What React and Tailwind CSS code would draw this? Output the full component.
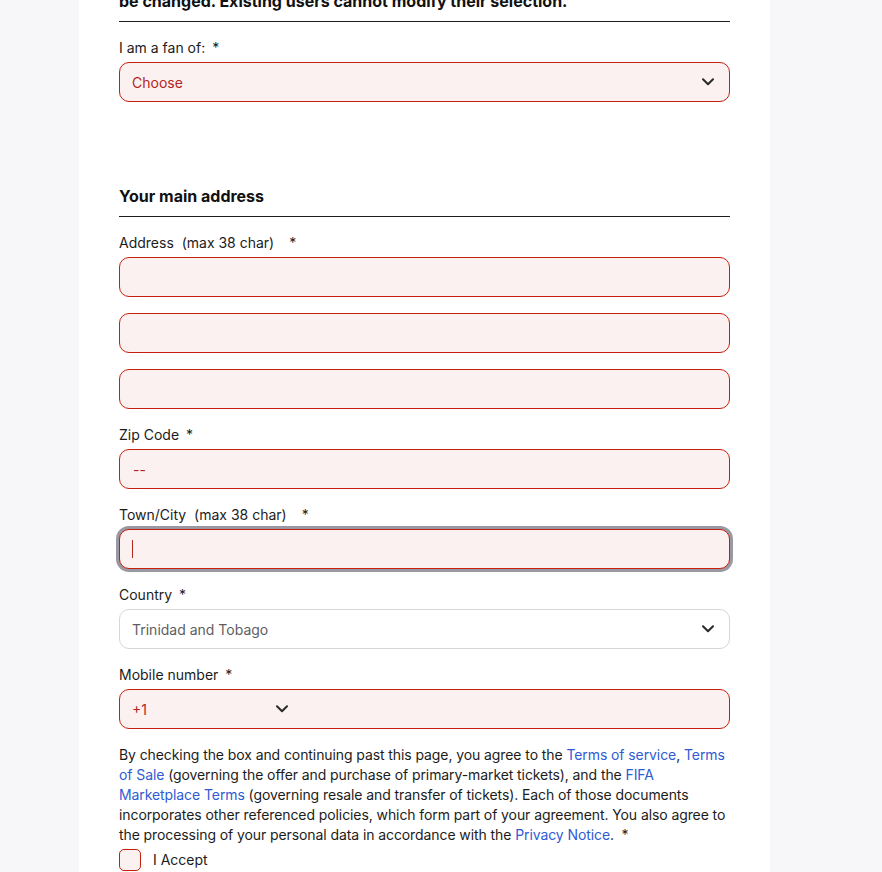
import React from "react";

const Chevron = ({ className = "" }) => (
  <svg width="12" height="8" viewBox="0 0 12 8" className={className} fill="none">
    <path d="M1 1.2 L6 6.2 L11 1.2" stroke="#2a2a2a" strokeWidth="2" strokeLinecap="round" strokeLinejoin="round" />
  </svg>
);

const Label = ({ children }) => (
  <div className="text-[14px] leading-5 text-[#1c1c1c] mb-1 whitespace-pre">
    {children}
    <span className="ml-[7px]">*</span>
  </div>
);

const ErrInput = ({ children, focused = false }) => (
  <div
    className={
      "h-10 rounded-[10px] bg-[#fcf1f1] flex items-center px-3 text-[14px] text-[#b3261e] " +
      (focused
        ? "border-[1.5px] border-[#c5200e] shadow-[0_0_0_3px_#9a99a3]"
        : "border border-[#c5200e]")
    }
  >
    {children}
  </div>
);

export default function App() {
  return (
    <div className="w-[882px] h-[872px] overflow-hidden bg-[#f7f7f9] font-['Inter',sans-serif]">
      <div className="ml-[79px] w-[691px] h-full bg-white px-10 flow-root">
        <div className="-mt-[11px]">
          <div className="text-[16px] leading-6 font-bold text-[#111] pb-2 border-b border-[#1c1c1c]">
            be changed. Existing users cannot modify their selection.
          </div>
        </div>

        <div className="mt-4">
          <Label>{"I am a fan of:"}</Label>
          <div className="h-10 rounded-[10px] border border-[#c5200e] bg-[#fcf1f1] flex items-center justify-between pl-3 pr-[15px] text-[14px] text-[#b3261e]">
            <span>Choose</span>
            <Chevron />
          </div>
        </div>

        <div className="mt-[82px] text-[16px] leading-6 font-bold text-[#111] pb-2 border-b border-[#1c1c1c]">
          Your main address
        </div>

        <div className="mt-4 flex flex-col gap-4">
          <div>
            <div className="text-[14px] leading-5 text-[#1c1c1c] mb-1 whitespace-pre">
              {"Address  (max 38 char)"}
              <span className="ml-[15px]">*</span>
            </div>
            <div className="flex flex-col gap-4">
              <ErrInput />
              <ErrInput />
              <ErrInput />
            </div>
          </div>

          <div>
            <Label>{"Zip Code"}</Label>
            <ErrInput>
              <span className="pl-[1px]">--</span>
            </ErrInput>
          </div>

          <div>
            <div className="text-[14px] leading-5 text-[#1c1c1c] mb-1 whitespace-pre">
              {"Town/City  (max 38 char)"}
              <span className="ml-[15px]">*</span>
            </div>
            <ErrInput focused>
              <span className="w-px h-[18px] bg-[#b3261e]" />
            </ErrInput>
          </div>

          <div>
            <Label>{"Country"}</Label>
            <div className="h-10 rounded-[10px] border border-[#d7d7d9] bg-white flex items-center justify-between pl-3 pr-[15px] text-[14px] text-[#5e5e62]">
              <span>Trinidad and Tobago</span>
              <Chevron />
            </div>
          </div>

          <div>
            <Label>{"Mobile number"}</Label>
            <ErrInput>
              <div className="w-[156px] flex items-center justify-between">
                <span>+1</span>
                <Chevron />
              </div>
            </ErrInput>
          </div>

          <p className="text-[14px] leading-5 text-[#1c1c1c] tracking-[-0.09px]">
            By checking the box and continuing past this page, you agree to the{" "}
            <span className="text-[#2f5bd3]">Terms of service</span>,{" "}
            <span className="text-[#2f5bd3]">Terms of Sale</span> (governing the offer and purchase of
            primary-market tickets), and the{" "}
            <span className="text-[#2f5bd3]">FIFA Marketplace Terms</span> (governing resale and transfer of
            tickets). Each of those documents incorporates other referenced policies, which form part of your
            agreement. You also agree to the processing of your personal data in accordance with the{" "}
            <span className="text-[#2f5bd3]">Privacy Notice</span>.{"\u00a0\u00a0"}*
          </p>
        </div>

        <div className="mt-1 flex items-center gap-3">
          <div className="w-[22px] h-[22px] rounded-[5px] border border-[#c5200e] bg-[#fcf1f1]" />
          <span className="text-[14px] leading-5 text-[#1c1c1c]">I Accept</span>
        </div>
      </div>
    </div>
  );
}
